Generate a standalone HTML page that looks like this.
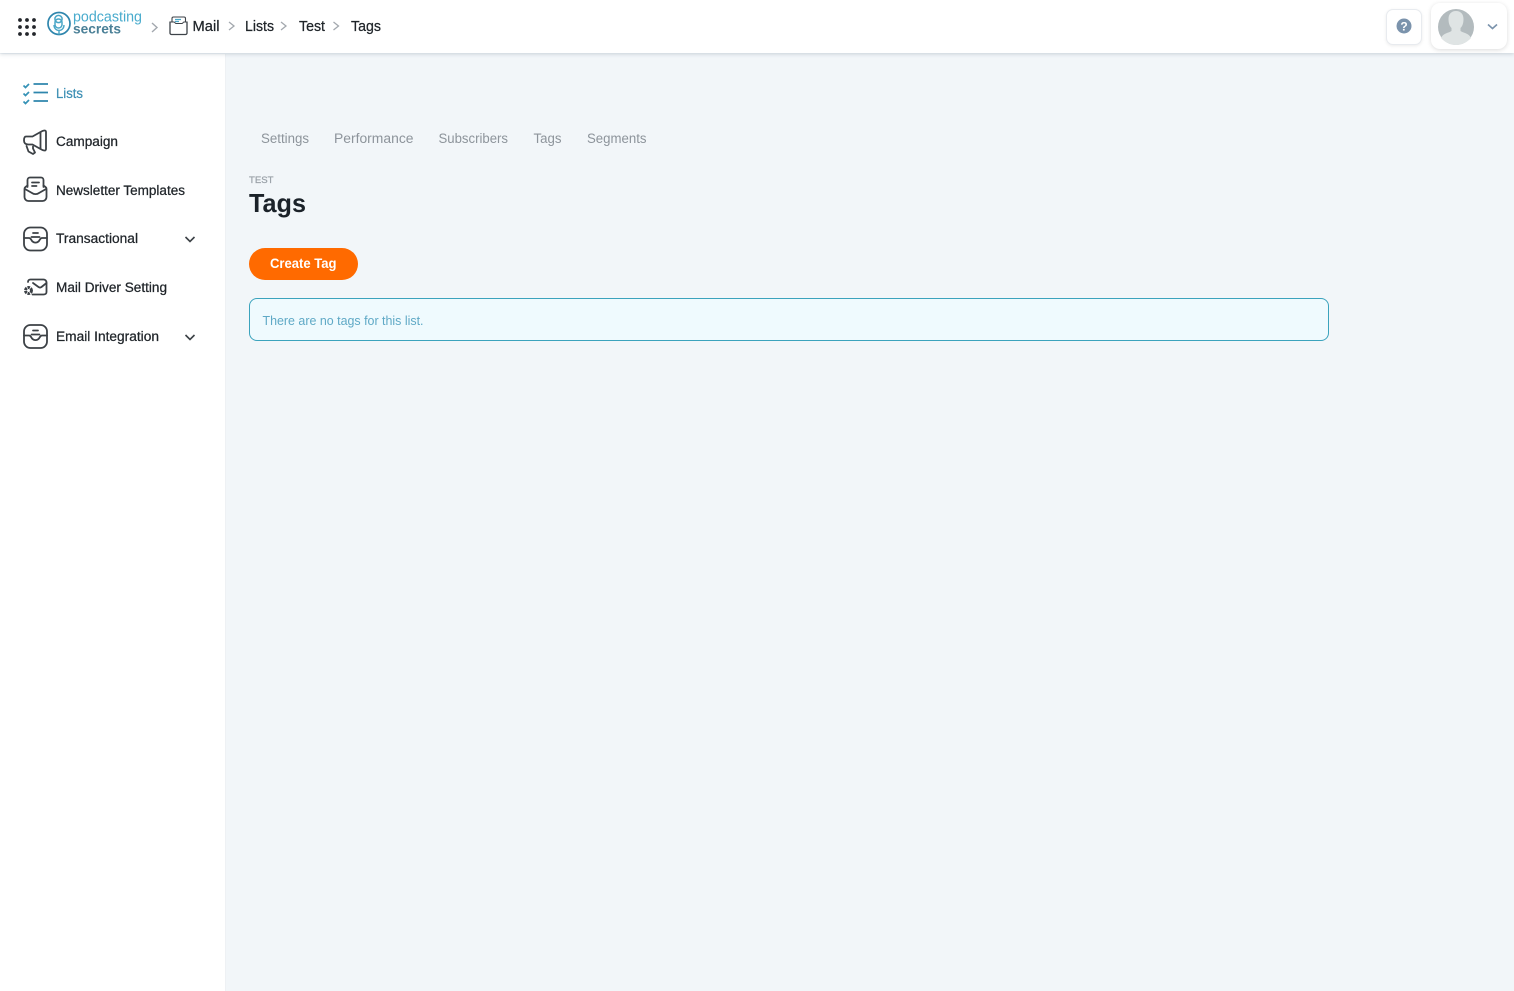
<!DOCTYPE html>
<html><head><meta charset="utf-8"><title>Tags</title>
<style>
html,body{margin:0;padding:0;width:1514px;height:991px;overflow:hidden;background:#f2f6f9;font-family:"Liberation Sans",sans-serif}
.a{position:absolute;box-sizing:border-box}
svg{position:absolute;left:0;top:0}
text{font-family:"Liberation Sans",sans-serif}
.m{stroke:currentColor;stroke-width:.25px}
</style></head><body>
<div class="a" style="left:0;top:54px;width:226px;height:937px;background:#fff;border-right:1px solid #eef1f4"></div>
<div class="a" style="left:0;top:0;width:1514px;height:53px;background:#fff;box-shadow:0 1px 4px rgba(90,110,130,.28)"></div>
<div class="a" style="left:1386px;top:9px;width:36px;height:36px;background:#fff;border:1px solid #e8ebef;border-radius:7px;box-shadow:0 1px 3px rgba(0,0,0,.08)"></div>
<div class="a" style="left:1431px;top:3px;width:76px;height:46px;background:#fff;border-radius:9px;box-shadow:0 1px 5px rgba(0,0,0,.14)"></div>
<div class="a" style="left:249px;top:248px;width:109px;height:32px;background:#ff6a00;border-radius:16px"></div>
<div class="a" style="left:249px;top:298px;width:1080px;height:43px;background:#effafe;border:1px solid #3ba3bd;border-radius:8px"></div>
<svg width="1514" height="991" viewBox="0 0 1514 991" fill="none">
<!-- grid -->
<g fill="#23262b"><circle cx="20" cy="20" r="1.900"/><circle cx="27" cy="20" r="1.900"/><circle cx="34" cy="20" r="1.900"/><circle cx="20" cy="27" r="1.900"/><circle cx="27" cy="27" r="1.900"/><circle cx="34" cy="27" r="1.900"/><circle cx="20" cy="34" r="1.900"/><circle cx="27" cy="34" r="1.900"/><circle cx="34" cy="34" r="1.900"/></g>
<!-- logo -->
<circle cx="59" cy="23.500" r="11" stroke="#2f86ad" stroke-width="1.700"/>
<circle cx="58.500" cy="19" r="3.600" stroke="#4aa6c6" stroke-width="1.500"/>
<rect x="55" y="19" width="7" height="9" rx="3.400" stroke="#4aa6c6" stroke-width="1.500"/>
<path d="M54 25c0 3.500 2.500 5.500 5 5.500s5-2 5-5.500M59 30v4.500" stroke="#4aa6c6" stroke-width="1.400"/>
<text x="73" y="21.500" font-size="15" fill="#48abcd" textLength="69" lengthAdjust="spacingAndGlyphs">podcasting</text>
<text x="73" y="33.500" font-size="14" font-weight="700" fill="#4b8097" textLength="48" lengthAdjust="spacingAndGlyphs">secrets</text>
<!-- breadcrumbs -->
<path d="M152 23l5 4.500-5 4.500" stroke="#a3a8ae" stroke-width="1.400"/>
<path d="M170 21.500V33a1.500 1.500 0 0 0 1.500 1.500h14a1.500 1.500 0 0 0 1.500-1.500V21.500" stroke="#3d4248" stroke-width="1.300"/>
<path d="M169.500 22h4.500c1 0 1 1.500 2 1.500h6c1 0 1-1.500 2-1.500h3.500M172 21.500V18.500a1.500 1.500 0 0 1 1.500-1.500h10.500a1.500 1.500 0 0 1 1.500 1.500v3" stroke="#3d4248" stroke-width="1.100"/>
<path d="M175 19.500h6M175 21.500h4" stroke="#4aa6c6" stroke-width="1.200"/>
<g class="m" font-size="14.500" fill="#1f2429" color="#1f2429">
<text x="192.500" y="31" textLength="27" lengthAdjust="spacingAndGlyphs">Mail</text>
<text x="245" y="31" textLength="29" lengthAdjust="spacingAndGlyphs">Lists</text>
<text x="299" y="31" textLength="26" lengthAdjust="spacingAndGlyphs">Test</text>
<text x="351" y="31" textLength="30" lengthAdjust="spacingAndGlyphs">Tags</text>
</g>
<path d="M229 22l5 4-5 4M281 22l5 4-5 4M333.500 22l5 4-5 4" stroke="#a3a8ae" stroke-width="1.300"/>
<!-- help -->
<circle cx="1404" cy="26" r="7.500" fill="#7b93ac"/>
<text x="1404" y="30.500" font-size="12" font-weight="700" fill="#fff" text-anchor="middle">?</text>
<!-- avatar -->
<circle cx="1456" cy="27" r="18" fill="#b3bbbe"/>
<path d="M1441 38c2-5 8-5 10.500-7v-3c-2-2-3-5-3-9 0-5 3-8 7.500-8s7.500 3 7.500 8c0 4-1 7-3 9v3c2.500 2 8.500 2 10.500 7-3.500 4-9 7-15 7s-11.500-3-15-7z" fill="#dfe4e4"/>
<path d="M1488 24.500l4.500 4 4.500-4" stroke="#7b93ac" stroke-width="1.600"/>
<!-- sidebar icons -->
<g stroke="#2f86ad" stroke-width="1.700">
<path d="M23.500 85.500l2 2 3.500-3.500M23.500 93.500l2 2 3.500-3.500M23.500 101.500l2 2 3.500-3.500" stroke="#3592b6"/>
<path d="M33.500 84h14.500M33.500 92.500h14.500M33.500 101h14.500"/>
</g>
<g stroke="#3c4146" stroke-width="1.800" stroke-linejoin="round" stroke-linecap="round">
<path d="M26 136.500h6.500l8-4.500c2.500-1.500 5.500-2.500 5.500 0v17c0 2.500-3 1.500-5.500 0l-8-4.500h-4c-2.500 0-4.500-1-4.500-4s1-4 2-4z"/>
<path d="M40.500 132.500v16"/>
<path d="M26.500 146l2 5.500 4.500 2.500 2-1.500-2-4v-2"/>
<!-- newsletter -->
<path d="M27.500 187v-7a2.500 2.500 0 0 1 2.500-2.500h11a2.500 2.500 0 0 1 2.500 2.500v7"/>
<path d="M27.500 185.500l-2 1.500a2.500 2.500 0 0 0-1 2v8a4 4 0 0 0 4 4h14a4 4 0 0 0 4-4v-8a2.500 2.500 0 0 0-1-2l-2-1.500M25 189l7 4c2 1.500 5 1.500 7 0l7-4"/>
<path d="M32 182.500h7M32 186h4.500"/>
<!-- transactional -->
<rect x="24" y="227.500" width="23" height="23" rx="6.500"/>
<path d="M24 238h5c2 0 2 2 3.500 3.500 2 1.500 4 1.500 6 0 1.500-1.500 1.500-3.500 3.500-3.500h5M33 233h5M31.500 237h8"/>
<!-- mail driver -->
<path d="M28 282c0-1.500 1-2.500 2.500-2.500h13c1.500 0 3 1.200 3 3v9.500c0 1.500-1.200 2.500-3 2.500h-11"/>
<path d="M33 283l5.500 4c1 .7 2 .7 3 0l5-4"/>
<!-- email integration -->
<rect x="24" y="325" width="23" height="23" rx="6.500"/>
<path d="M24 335.500h5c2 0 2 2 3.500 3.500 2 1.500 4 1.500 6 0 1.500-1.500 1.500-3.500 3.500-3.500h5M33 330.500h5M31.500 334.500h8"/>
</g>
<circle cx="28.500" cy="290.500" r="3" stroke="#3c4146" stroke-width="3" stroke-dasharray="2.400 .8"/>
<!-- chevrons -->
<path d="M185.500 237l4.500 4.500 4.500-4.500M185.500 335l4.500 4.500 4.500-4.500" stroke="#3c4146" stroke-width="1.600"/>
<!-- sidebar text -->
<g class="m" font-size="13.500" fill="#1f2429" color="#1f2429">
<text x="56" y="98" fill="#3d8fb4" color="#3d8fb4" textLength="27" lengthAdjust="spacingAndGlyphs">Lists</text>
<text x="56" y="146" textLength="62" lengthAdjust="spacingAndGlyphs">Campaign</text>
<text x="56" y="195" textLength="129" lengthAdjust="spacingAndGlyphs">Newsletter Templates</text>
<text x="56" y="243" textLength="82" lengthAdjust="spacingAndGlyphs">Transactional</text>
<text x="56" y="292" textLength="111" lengthAdjust="spacingAndGlyphs">Mail Driver Setting</text>
<text x="56" y="341" textLength="103" lengthAdjust="spacingAndGlyphs">Email Integration</text>
</g>
<!-- tabs -->
<g font-size="13.500" fill="#8d949b">
<text x="261" y="143" textLength="48" lengthAdjust="spacingAndGlyphs">Settings</text>
<text x="334" y="143" textLength="79.500" lengthAdjust="spacingAndGlyphs">Performance</text>
<text x="438.500" y="143" textLength="69.500" lengthAdjust="spacingAndGlyphs">Subscribers</text>
<text x="533.500" y="143" textLength="28" lengthAdjust="spacingAndGlyphs">Tags</text>
<text x="587" y="143" textLength="59.500" lengthAdjust="spacingAndGlyphs">Segments</text>
</g>
<!-- heading -->
<text x="249" y="183" font-size="9.500" fill="#9aa1a8" class="m" color="#9aa1a8" textLength="24.500" lengthAdjust="spacingAndGlyphs">TEST</text>
<text x="249" y="212" font-size="26" font-weight="700" fill="#1b2229" textLength="57" lengthAdjust="spacingAndGlyphs">Tags</text>
<text x="270" y="268" font-size="13.500" font-weight="700" fill="#fff" textLength="66.500" lengthAdjust="spacingAndGlyphs">Create Tag</text>
<text x="262.500" y="325" font-size="12.500" fill="#5fa9c6" textLength="161" lengthAdjust="spacingAndGlyphs">There are no tags for this list.</text>
</svg>
</body></html>
